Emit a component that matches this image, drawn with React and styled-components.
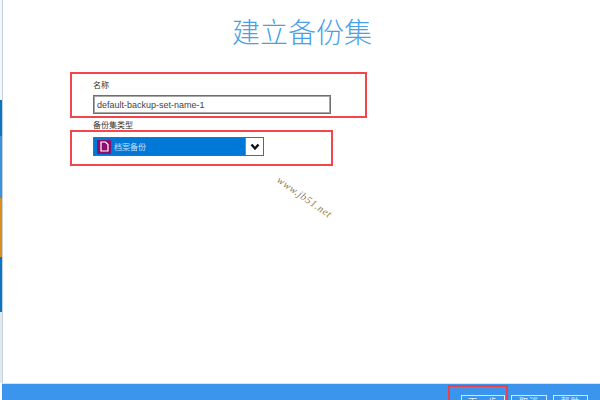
import React from 'react';
import styled, { createGlobalStyle } from 'styled-components';

const Global = createGlobalStyle`
  html, body { margin: 0; padding: 0; background: #fff; }
  body { font-family: "Liberation Sans", "Noto Sans CJK SC", sans-serif; }
`;
const Page = styled.div`
  position: relative; width: 600px; height: 400px; overflow: hidden;
  display: flex; flex-direction: column; background: #fff;
`;
const Body = styled.div`flex: 1; display: flex; min-height: 0;`;
const Stripe = styled.div`width: 2px; flex: none; display: flex; flex-direction: column; border-right: 1px solid #c4d3e2;`;
const Segment = styled.div`height: ${p => p.$h}px; background: ${p => p.$c};`;
const Main = styled.main`flex: 1; display: flex; flex-direction: column; padding-left: 67px;`;
const Title = styled.h1`
  margin: 0; padding-top: 13px; height: 58px; box-sizing: border-box; width: 464px;
  text-align: center; font: 300 28px/36px "Noto Sans CJK SC", sans-serif; color: #4a9fe8;
  white-space: nowrap;
`;
const Frame = styled.section`
  box-sizing: border-box; border: 2px solid #f4444c; width: ${p => p.$w}px; height: ${p => p.$h}px;
  padding: ${p => p.$pt}px 0 0 21px; display: flex; flex-direction: column;
`;
const FirstFrame = styled(Frame)`margin-top: 14px;`;
const Label = styled.label`font-size: 8px; line-height: 10px; color: #333; display: block;`;
const NameInput = styled.div`
  box-sizing: border-box; width: 238px; height: 19px; margin-top: 4px;
  border: 1px solid #6e6e6e; box-shadow: inset 0 0 0 1px #a8a8a8;
  font-size: 9px; line-height: 18px; color: #444; padding-left: 3px; background: #fff;
`;
const TypeLabel = styled(Label)`margin: 3px 0 0 23px; height: 9px; line-height: 10px; position: relative; z-index: 1;`;
const Select = styled.div`
  box-sizing: border-box; width: 171px; height: 19px; border: 1px solid #666;
  display: flex; background: #fff;
`;
const Chosen = styled.div`
  flex: 1; background: #0078d7; display: flex; align-items: center; gap: 3px; padding-left: 3px;
  color: #c4e0f8; font-size: 8px;
`;
const TypeIcon = styled.span`
  width: 14px; height: 14px; background: #8e0d6d; display: flex; align-items: center; justify-content: center;
`;
const Chevron = styled.div`width: 17px; display: flex; align-items: center; justify-content: center; border-left: 1px solid #888;`;
const Watermark = styled.div`
  position: absolute; left: 272px; top: 192px; width: 66px;
  transform: rotate(35deg); font: italic 10.5px/12px "Liberation Serif", serif; color: #8f7d58; white-space: nowrap;
  letter-spacing: 0.6px;
`;
const Footer = styled.footer`
  height: 17px; flex: none; background: #3b95ec; border-top: 1px solid #d4e4f2; margin-left: 2px;
  display: flex; justify-content: flex-end; gap: 6px; padding: 11px 12px 0 0; box-sizing: border-box;
`;
const Button = styled.button`
  box-sizing: border-box; width: ${p => p.$w}px; height: 22px; flex: none; border: 1px solid #d6e8f8; border-bottom: 0;
  background: transparent; color: #e4f1fc; font: 9px/12px "Noto Sans CJK SC", sans-serif; padding: 0; letter-spacing: 1px;
  display: flex; align-items: flex-start; justify-content: center;
`;
const NextFrame = styled.div`
  position: absolute; left: 448px; top: 385px; width: 60px; height: 24px; box-sizing: border-box;
  border: 2px solid #e8404c;
`;

export default function App() {
  return (
    <Page>
      <Global />
      <Body>
        <Stripe>
          <Segment $h={100} $c="#f4f7fa" />
          <Segment $h={36} $c="#0f74c0" />
          <Segment $h={62} $c="#3f90da" />
          <Segment $h={59} $c="#df8c1c" />
          <Segment $h={55} $c="#0f74c0" />
          <Segment $h={71} $c="#e4e8ee" />
        </Stripe>
        <Main>
          <Title>建立备份集</Title>
          <FirstFrame $w={297} $h={46} $pt={7}>
            <Label>名称</Label>
            <NameInput>default-backup-set-name-1</NameInput>
          </FirstFrame>
          <TypeLabel>备份集类型</TypeLabel>
          <Frame $w={263} $h={36} $pt={5}>
            <Select>
              <Chosen>
                <TypeIcon>
                  <svg width="9" height="11" viewBox="0 0 9 11" fill="none" stroke="#fff" strokeWidth="1.2">
                    <path d="M1 1h4.5L8 3.5V10H1z" />
                  </svg>
                </TypeIcon>
                档案备份
              </Chosen>
              <Chevron>
                <svg width="10" height="8" viewBox="0 0 10 8" fill="none" stroke="#111" strokeWidth="2.4">
                  <path d="M1.5 1.5 5 5.5l3.5-4" />
                </svg>
              </Chevron>
            </Select>
          </Frame>
        </Main>
      </Body>
      <Footer>
        <Button $w={44}>下一步</Button>
        <Button $w={36}>取消</Button>
        <Button $w={35}>帮助</Button>
      </Footer>
      <NextFrame />
      <Watermark>www.jb51.net</Watermark>
    </Page>
  );
}
